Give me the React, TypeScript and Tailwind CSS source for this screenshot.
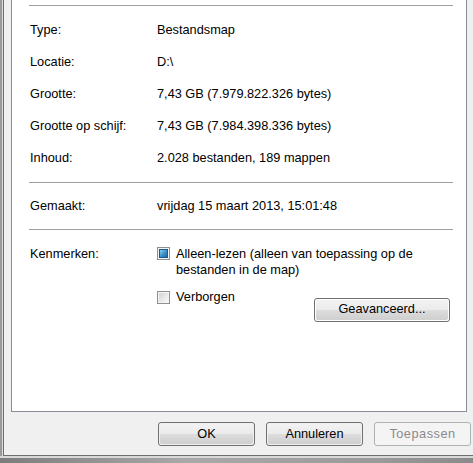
import React from "react";

const font = { fontFamily: '"Liberation Sans", Arial, sans-serif' };

function Row({ label, value }: { label: string; value: string }) {
  return (
    <div className="flex h-[32px] items-center">
      <div className="w-[127px] shrink-0">{label}</div>
      <div className="whitespace-nowrap">{value}</div>
    </div>
  );
}

function Sep() {
  return <div className="ml-[17px] h-px w-[424px] bg-[#a0a0a0]" />;
}

function CheckedBox() {
  return (
    <div className="flex h-[13px] w-[13px] shrink-0 items-center justify-center border border-[#8e8f8f] bg-[#f4f4f4]">
      <div className="h-[9px] w-[9px] border border-[#1d5a8c] bg-gradient-to-br from-[#8fd0f0] via-[#3c94cc] to-[#1e6aa4]" />
    </div>
  );
}

function UncheckedBox() {
  return (
    <div className="flex h-[13px] w-[13px] shrink-0 items-center justify-center border border-[#8e8f8f] bg-[#f4f4f4]">
      <div className="h-[9px] w-[9px] bg-gradient-to-br from-[#d4d4d4] to-[#f8f8f8]" />
    </div>
  );
}

function Btn({ children, disabled, w = "w-[97px]" }: { children: React.ReactNode; disabled?: boolean; w?: string }) {
  if (disabled) {
    return (
      <div className={`${w} flex h-[24px] items-center justify-center rounded-[3px] border border-[#adb2b5] bg-[#f4f4f4] text-[#8a8a8a] tracking-[0.5px]`}>
        {children}
      </div>
    );
  }
  return (
    <div className={`${w} h-[24px] rounded-[3px] border border-[#707070] p-px`}>
      <div className="flex h-full w-full items-center justify-center rounded-[2px] bg-[linear-gradient(to_bottom,#f2f2f2_0%,#ebebeb_50%,#dddddd_50%,#cfcfcf_100%)] text-black">
        {children}
      </div>
    </div>
  );
}

export default function App() {
  return (
    <div className="flex h-[463px] w-[473px] flex-col overflow-hidden bg-[#f0f0f0] text-[12.75px] text-black" style={font}>
      <div className="flex h-[456px] shrink-0">
        <div className="w-[2px] bg-[#9a9a9a]" />
        <div className="w-px bg-[#dcdcdc]" />
        <div className="w-px bg-[#6e6e6e]" />
        <div className="flex flex-1 flex-col border-b border-[#6e6e6e] pl-[7px]">
          <div className="h-[412px] w-[456px] border-x border-b border-[#898c95] bg-white">
            <div className="h-[5px]" />
            <Sep />
            <div className="h-[8px]" />
            <div className="pl-[18px]">
              <Row label="Type:" value="Bestandsmap" />
              <Row label="Locatie:" value="D:\" />
              <Row label="Grootte:" value="7,43 GB (7.979.822.326 bytes)" />
              <Row label="Grootte op schijf:" value="7,43 GB (7.984.398.336 bytes)" />
              <Row label="Inhoud:" value="2.028 bestanden, 189 mappen" />
            </div>
            <div className="h-[8px]" />
            <Sep />
            <div className="h-[7px]" />
            <div className="pl-[18px]">
              <Row label="Gemaakt:" value="vrijdag 15 maart 2013, 15:01:48" />
            </div>
            <div className="h-[7px]" />
            <Sep />
            <div className="flex pl-[18px] pr-[16px] pt-[16px] leading-[16px]">
              <div className="w-[127px] shrink-0">Kenmerken:</div>
              <div className="flex flex-1 flex-col">
                <div className="flex items-start">
                  <div className="mt-[1px] flex h-[13px] items-center">
                    <CheckedBox />
                  </div>
                  <div className="ml-[6px]">
                    Alleen-lezen (alleen van toepassing op de
                    <br />
                    bestanden in de map)
                  </div>
                </div>
                <div className="mt-[11px] flex items-start justify-between">
                  <div className="flex items-center">
                    <div className="mt-[1px]">
                      <UncheckedBox />
                    </div>
                    <div className="ml-[6px]">Verborgen</div>
                  </div>
                  <div className="mt-[9px]">
                    <Btn w="w-[136px]">
                      <span className="h-[24px] leading-[22px]">Geavanceerd...</span>
                    </Btn>
                  </div>
                </div>
              </div>
            </div>
          </div>
          <div className="ml-[147px] mt-[10px] flex gap-[11px]">
            <Btn>OK</Btn>
            <Btn>Annuleren</Btn>
            <Btn disabled>Toepassen</Btn>
          </div>
        </div>
      </div>
      <div className="h-[2px] bg-[#d8d8d8]" />
      <div className="flex-1 bg-[linear-gradient(to_right,#7d7d7d,#a9a9a9_40%,#9a9a9a_80%,#8a8a8a)]" />
    </div>
  );
}
